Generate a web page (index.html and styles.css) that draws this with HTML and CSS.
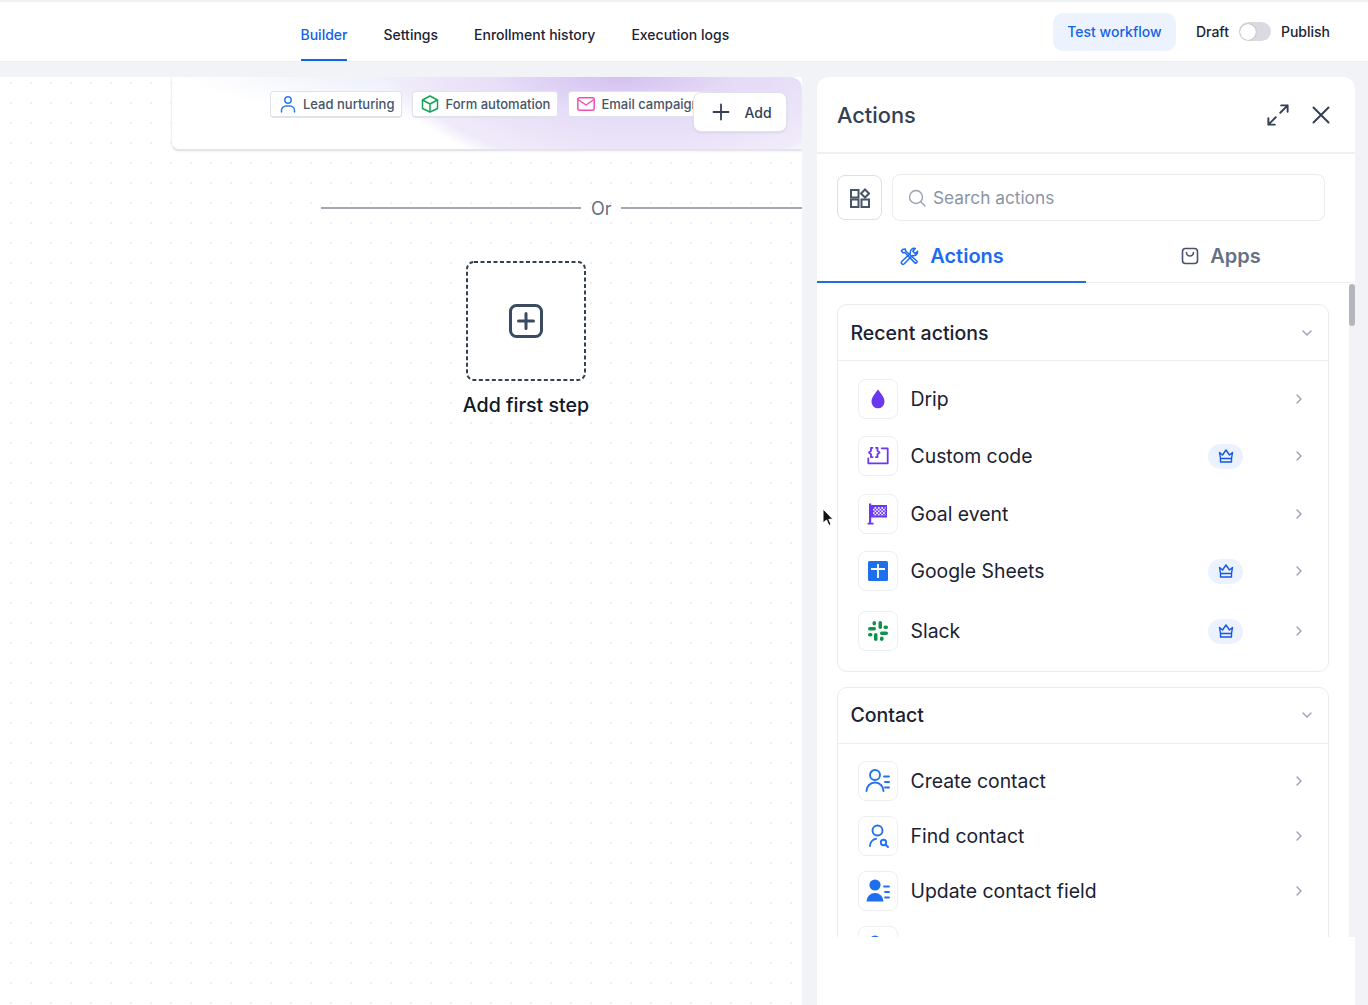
FILE: index.html
```html
<!DOCTYPE html>
<html lang="en">
<head>
  <meta charset="UTF-8">
  <meta name="viewport" content="width=device-width, initial-scale=1.0">
  <title>Workflow builder</title>
  <link rel="stylesheet" href="styles.css">
</head>
<body>
  <!-- Top bar -->
  <header class="topbar">
    <nav class="tabs">
      <a class="tab active">Builder</a>
      <a class="tab">Settings</a>
      <a class="tab">Enrollment history</a>
      <a class="tab">Execution logs</a>
    </nav>
    <div class="top-actions">
      <button class="test-btn">Test workflow</button>
      <span class="status">Draft</span>
      <span class="toggle"><span class="knob"></span></span>
      <span class="status">Publish</span>
    </div>
  </header>

  <main class="workspace">
    <!-- Canvas -->
    <section class="canvas">
      <div class="template-card">
        <span class="chip">
          <svg width="18" height="18" viewBox="0 0 18 18" fill="none" stroke="#2f7bf0" stroke-width="1.5" stroke-linecap="round"><circle cx="9" cy="5" r="3.2"/><path d="M2.5 17v-1.500a4.500 4.500 0 0 1 4.500-4.500h4a4.500 4.500 0 0 1 4.500 4.500V17"/></svg>
          Lead nurturing
        </span>
        <span class="chip">
          <svg width="18" height="18" viewBox="0 0 18 18" fill="none" stroke="#16a35a" stroke-width="1.5" stroke-linejoin="round"><path d="M9 1l7.500 4v8.500L9 17l-7.500-3.500V5z"/><path d="M1.500 5L9 9l7.500-4M9 9v8"/></svg>
          Form automation
        </span>
        <span class="chip chip-email">
          <svg width="18" height="18" viewBox="0 0 18 18" fill="none" stroke="#ee4fb5" stroke-width="1.500" stroke-linejoin="round"><rect x="0.800" y="2.800" width="16.400" height="12.400" rx="2"/><path d="M1 4.500l8 5.500 8-5.500"/></svg>
          Email campaign
        </span>
        <span class="chip chip-hidden"></span>
      </div>
      <button class="add-btn">
        <svg width="18" height="18" viewBox="0 0 18 18" fill="none" stroke="#344054" stroke-width="1.800" stroke-linecap="round"><path d="M9 1.500v15M1.500 9h15"/></svg>
        Add
      </button>

      <div class="or-row">
        <span class="or-line first"></span>
        <span class="or-text">Or</span>
        <span class="or-line"></span>
      </div>

      <div class="first-step">
        <div class="step-box">
          <svg class="step-dash" width="120" height="120" viewBox="0 0 120 120" fill="none"><rect x="1" y="1" width="118" height="118" rx="7" stroke="#344054" stroke-width="2" stroke-dasharray="4 2.500"/></svg>
          <svg width="36" height="36" viewBox="0 0 36 36" fill="none" stroke="#3a4a60" stroke-width="3" stroke-linecap="round"><rect x="2.500" y="2.500" width="31" height="31" rx="6"/><path d="M18 10.500v15M10.500 18h15"/></svg>
        </div>
        <div class="step-label">Add first step</div>
      </div>
    </section>

    <!-- Actions panel -->
    <aside class="panel">
      <div class="panel-head">
        <h2>Actions</h2>
        <div class="panel-icons">
          <svg width="22" height="22" viewBox="0 0 24 24" fill="none" stroke="#344054" stroke-width="2.100" stroke-linecap="round" stroke-linejoin="round"><path d="M14.500 9.500L22.500 1.500M15.500 1.500h7v7M9.500 14.500l-8 8M1.500 15.500v7h7"/></svg>
          <svg width="20" height="20" viewBox="0 0 20 20" fill="none" stroke="#344054" stroke-width="2" stroke-linecap="round"><path d="M2.500 2.500l15 15M17.500 2.500l-15 15"/></svg>
        </div>
      </div>

      <div class="search-row">
        <button class="grid-btn">
          <svg width="20" height="20" viewBox="0 0 20 20" fill="none" stroke="#475467" stroke-width="2"><rect x="1" y="2" width="7.500" height="7.500"/><rect x="1" y="11.500" width="7.500" height="7.500"/><rect x="11.500" y="11.500" width="7.500" height="7.500"/><path d="M15 1.500l4 4-4 4-4-4z"/></svg>
        </button>
        <div class="search-box">
          <svg width="18" height="18" viewBox="0 0 18 18" fill="none" stroke="#98a2b3" stroke-width="1.400" stroke-linecap="round"><circle cx="8" cy="8" r="6.500"/><path d="M13 13l4 4"/></svg>
          <span>Search actions</span>
        </div>
      </div>

      <div class="panel-tabs">
        <div class="panel-tab active">
          <svg width="19" height="19" viewBox="0 0 20 20" fill="none" stroke="#1d6bf0" stroke-width="1.600" stroke-linejoin="round" stroke-linecap="round"><path d="M3 2.500L1.500 4l1.500 2 2-.2L16 17a1.800 1.800 0 0 0 2-2L6 4.200 5.500 2z"/><path d="M18.500 4.500l-2.500 2.500-2.500-2.500 2.500-3a4.200 4.200 0 0 0-5 5.200L2 15a1.800 1.800 0 0 0 2.500 2.700l8.500-8.800a4.200 4.200 0 0 0 5.500-4.400z"/></svg>
          Actions
        </div>
        <div class="panel-tab">
          <svg width="18" height="18" viewBox="0 0 18 18" fill="none" stroke="#475467" stroke-width="1.600" stroke-linecap="round"><rect x="1.500" y="1.500" width="15" height="15" rx="3"/><path d="M5.500 5.500a3.500 3.500 0 0 0 7 0"/></svg>
          Apps
        </div>
      </div>

      <div class="action-scroll">
        <div class="action-card">
          <div class="card-head">
            <span>Recent actions</span>
            <svg class="chev-down" width="12" height="12" viewBox="0 0 12 12" fill="none" stroke="#98a2b3" stroke-width="1.400" stroke-linecap="round" stroke-linejoin="round"><path d="M2 4l4 4 4-4"/></svg>
          </div>
          <div class="action-list">
            <div class="action-row">
              <span class="action-icon"><svg width="24" height="24" viewBox="0 0 24 24"><path fill="#6a38ef" d="M12 2.500C9.500 6 5.500 10 5.500 14.800a6.500 6.500 0 0 0 13 0C18.500 10 14.500 6 12 2.500z"/></svg></span>
              <span class="action-name">Drip</span>
              <svg class="chev" width="12" height="12" viewBox="0 0 12 12" fill="none" stroke="#98a2b3" stroke-width="1.400" stroke-linecap="round" stroke-linejoin="round"><path d="M4 2l4 4-4 4"/></svg>
            </div>
            <div class="action-row">
              <span class="action-icon"><svg width="24" height="24" viewBox="0 0 24 24" fill="none" stroke="#6a38ef" stroke-width="1.800" stroke-linecap="round" stroke-linejoin="round"><path d="M15.700 4.300H21.700V19.300H2.300V14.300"/><path d="M6.500 3.800H5v3L3 8.500l2 1.700v3h1.500M10 3.800h1.500v3l2 1.700-2 1.700v3H10"/></svg></span>
              <span class="action-name">Custom code</span>
              <span class="crown"><svg width="16" height="16" viewBox="0 0 16 16" fill="none" stroke="#1557e6" stroke-width="1.400" stroke-linejoin="round"><path d="M1.500 4.500L4.500 7 8 2l3.500 5 3-2.500-1 6h-11z"/><path d="M2.500 10.500v3.500h11v-3.500"/></svg></span>
              <svg class="chev" width="12" height="12" viewBox="0 0 12 12" fill="none" stroke="#98a2b3" stroke-width="1.400" stroke-linecap="round" stroke-linejoin="round"><path d="M4 2l4 4-4 4"/></svg>
            </div>
            <div class="action-row">
              <span class="action-icon"><svg width="24" height="24" viewBox="0 0 24 24"><defs><pattern id="check" width="3.400" height="3.400" patternUnits="userSpaceOnUse"><rect width="3.400" height="3.400" fill="#6a38ef"/><rect width="1.700" height="1.700" fill="#efe9ff"/><rect x="1.700" y="1.700" width="1.700" height="1.700" fill="#efe9ff"/></pattern></defs><path fill="#6a38ef" d="M3 1.500h2.200v21H3zM1.500 20.800h6v1.700h-6z"/><rect x="5" y="3" width="16" height="12.500" fill="#6a38ef"/><rect x="7" y="5" width="12.500" height="8.500" fill="url(#check)"/></svg></span>
              <span class="action-name">Goal event</span>
              <svg class="chev" width="12" height="12" viewBox="0 0 12 12" fill="none" stroke="#98a2b3" stroke-width="1.400" stroke-linecap="round" stroke-linejoin="round"><path d="M4 2l4 4-4 4"/></svg>
            </div>
            <div class="action-row">
              <span class="action-icon"><svg width="20" height="20" viewBox="0 0 20 20"><rect width="20" height="20" rx="1.500" fill="#1d6fee"/><path d="M3 8h14M10 3v14" stroke="#fff" stroke-width="1.800" fill="none"/></svg></span>
              <span class="action-name">Google Sheets</span>
              <span class="crown"><svg width="16" height="16" viewBox="0 0 16 16" fill="none" stroke="#1557e6" stroke-width="1.400" stroke-linejoin="round"><path d="M1.500 4.500L4.500 7 8 2l3.500 5 3-2.500-1 6h-11z"/><path d="M2.500 10.500v3.500h11v-3.500"/></svg></span>
              <svg class="chev" width="12" height="12" viewBox="0 0 12 12" fill="none" stroke="#98a2b3" stroke-width="1.400" stroke-linecap="round" stroke-linejoin="round"><path d="M4 2l4 4-4 4"/></svg>
            </div>
            <div class="action-row slack-row">
              <span class="action-icon"><svg width="22" height="22" viewBox="0 0 22 22" fill="#0d9448"><rect x="1" y="7" width="8" height="3.500" rx="1.750"/><rect x="5.500" y="1" width="3.500" height="4.500" rx="1.750"/><rect x="11.500" y="1" width="3.500" height="8" rx="1.750"/><rect x="16.500" y="5.500" width="4.500" height="3.500" rx="1.750"/><rect x="13" y="11.500" width="8" height="3.500" rx="1.750"/><rect x="13" y="16.500" width="3.500" height="4.500" rx="1.750"/><rect x="7" y="13" width="3.500" height="8" rx="1.750"/><rect x="1" y="13" width="4.500" height="3.500" rx="1.750"/></svg></span>
              <span class="action-name">Slack</span>
              <span class="crown"><svg width="16" height="16" viewBox="0 0 16 16" fill="none" stroke="#1557e6" stroke-width="1.400" stroke-linejoin="round"><path d="M1.500 4.500L4.500 7 8 2l3.500 5 3-2.500-1 6h-11z"/><path d="M2.500 10.500v3.500h11v-3.500"/></svg></span>
              <svg class="chev" width="12" height="12" viewBox="0 0 12 12" fill="none" stroke="#98a2b3" stroke-width="1.400" stroke-linecap="round" stroke-linejoin="round"><path d="M4 2l4 4-4 4"/></svg>
            </div>
          </div>
        </div>

        <div class="action-card">
          <div class="card-head">
            <span>Contact</span>
            <svg class="chev-down" width="12" height="12" viewBox="0 0 12 12" fill="none" stroke="#98a2b3" stroke-width="1.400" stroke-linecap="round" stroke-linejoin="round"><path d="M2 4l4 4 4-4"/></svg>
          </div>
          <div class="action-list contact-list">
            <div class="action-row">
              <span class="action-icon"><svg width="26" height="26" viewBox="0 0 26 26" fill="none" stroke="#2571ee" stroke-width="1.900" stroke-linecap="round"><circle cx="10" cy="7" r="5"/><path d="M1.500 23a8.500 8.500 0 0 1 17 0M19 8.500h5M20 14h4M20 19.500h4"/></svg></span>
              <span class="action-name">Create contact</span>
              <svg class="chev" width="12" height="12" viewBox="0 0 12 12" fill="none" stroke="#98a2b3" stroke-width="1.400" stroke-linecap="round" stroke-linejoin="round"><path d="M4 2l4 4-4 4"/></svg>
            </div>
            <div class="action-row">
              <span class="action-icon"><svg width="24" height="24" viewBox="0 0 24 24" fill="none" stroke="#2571ee" stroke-width="1.900" stroke-linecap="round"><circle cx="11.500" cy="6.500" r="5"/><path d="M4 22a7.500 7.500 0 0 1 6-7.300"/><circle cx="17.500" cy="18.500" r="2.700"/><path d="M20 21l2 2"/></svg></span>
              <span class="action-name">Find contact</span>
              <svg class="chev" width="12" height="12" viewBox="0 0 12 12" fill="none" stroke="#98a2b3" stroke-width="1.400" stroke-linecap="round" stroke-linejoin="round"><path d="M4 2l4 4-4 4"/></svg>
            </div>
            <div class="action-row">
              <span class="action-icon"><svg width="26" height="26" viewBox="0 0 26 26" fill="none"><circle cx="10" cy="7" r="5.600" fill="#1d6fee"/><path d="M1.500 23.500a8.500 8.500 0 0 1 17 0z" fill="#1d6fee"/><path d="M19 8.500h5M20 14h4M20 19.500h4" stroke="#2571ee" stroke-width="1.800" stroke-linecap="round"/></svg></span>
              <span class="action-name">Update contact field</span>
              <svg class="chev" width="12" height="12" viewBox="0 0 12 12" fill="none" stroke="#98a2b3" stroke-width="1.400" stroke-linecap="round" stroke-linejoin="round"><path d="M4 2l4 4-4 4"/></svg>
            </div>
            <div class="action-row">
              <span class="action-icon"><svg width="26" height="26" viewBox="0 0 26 26" fill="none"><circle cx="10" cy="8" r="5.600" fill="#2571ee"/></svg></span>
            </div>
          </div>
        </div>
      </div>
      <div class="scroll-track"><div class="scroll-thumb"></div></div>
    </aside>
  </main>

  <!-- Mouse pointer in the capture -->
  <svg class="cursor" width="13" height="19" viewBox="0 0 13 19"><path d="M1 1v14l3.500-3 2.300 5.500 2.300-1-2.300-5.200H11z" fill="#111" stroke="#fff" stroke-width="1"/></svg>
</body>
</html>
```

FILE: styles.css
```css
* {
  box-sizing: border-box;
}
html, body {
  height: 100%;
}
body {
  margin: 0;
  height: 100vh;
  overflow: hidden;
  display: flex;
  flex-direction: column;
  font-family: Inter, "Liberation Sans", sans-serif;
  background-color: #f1f3f7;
  color: #101828;
}
button {
  font-family: inherit;
  cursor: pointer;
}

/* Top bar */
.topbar {
  height: 62px;
  flex-shrink: 0;
  display: flex;
  justify-content: space-between;
  padding: 0 38px 0 300.500px;
  background: white;
  border-top: 2px solid #f0f1f4;
  border-bottom: 1px solid #eceef2;
}
.tabs {
  display: flex;
  gap: 36px;
}
.tab {
  display: flex;
  align-items: center;
  height: 59px;
  padding-top: 8px;
  font-size: 14px;
  font-weight: 500;
  color: #1d2433;
  border-bottom: 2px solid transparent;
}
.tab.active {
  color: #1263e6;
  border-bottom-color: #1263e6;
}
.top-actions {
  display: flex;
  align-items: center;
  height: 59px;
  font-size: 14px;
  font-weight: 500;
}
.test-btn {
  width: 123px;
  height: 38px;
  margin-right: 20px;
  border: none;
  border-radius: 10px;
  background: #edf3fe;
  color: #1263e6;
  font-size: 14px;
  font-weight: 500;
}
.status {
  color: #1d2433;
}
.toggle {
  width: 32px;
  height: 19px;
  margin: 0 10px;
  padding: 1.500px;
  border-radius: 10px;
  background: #d9dbe0;
}
.knob {
  display: block;
  width: 16px;
  height: 16px;
  border-radius: 50%;
  background: white;
  box-shadow: 0 0 1px rgba(0, 0, 0, 0.5);
}

/* Canvas and panel */
.workspace {
  flex: 1;
  min-height: 0;
  display: flex;
  gap: 15px;
  padding-top: 15px;
}
.canvas {
  position: relative;
  width: 802px;
  overflow: hidden;
  background-color: white;
  background-image: radial-gradient(circle, #eeeff2 1px, transparent 1.200px);
  background-size: 20px 20px;
  background-position: 1px -4px;
}
.template-card {
  display: flex;
  align-items: flex-start;
  gap: 10px;
  height: 74px;
  margin-left: 171px;
  padding: 14px 0 0 98px;
  border: 1px solid #eef0f3;
  border-top: none;
  border-right: none;
  border-bottom: 2px solid #e3e5ea;
  border-radius: 0 12px 0 8px;
  background-color: white;
  background-image:
    radial-gradient(ellipse 120px 36px at 447px 0, #d3c1f0, transparent),
    radial-gradient(ellipse 272px 142px at 469px -37px, #e6dcf7 55%, #f0ebfa 92%, transparent 100%),
    radial-gradient(ellipse 420px 60px at 420px -10px, #edf0fb 50%, transparent 100%);
  box-shadow: 0 1px 2px rgba(16, 24, 40, 0.05);
}
.chip {
  display: flex;
  flex-shrink: 0;
  align-items: center;
  gap: 6px;
  height: 27px;
  padding: 0 7px 0 8px;
  border: 1px solid #e0e3e9;
  border-bottom-width: 2px;
  border-radius: 4px;
  background: white;
  font-size: 13px;
  font-weight: 500;
  color: #475467;
  white-space: nowrap;
}
.chip-email {
  width: 152px;
  margin-right: -3px;
  overflow: hidden;
}
.chip-hidden {
  width: 44px;
}
.add-btn {
  position: absolute;
  left: 693px;
  top: 15px;
  width: 94px;
  height: 40px;
  display: flex;
  align-items: center;
  justify-content: center;
  gap: 14px;
  padding: 0 0 0 4px;
  border: 1px solid #e0e3e9;
  border-radius: 8px;
  background: white;
  color: #344054;
  font-size: 14px;
  font-weight: 500;
  box-shadow: 0 1px 2px rgba(16, 24, 40, 0.08);
}
.or-row {
  display: flex;
  align-items: center;
  gap: 10px;
  margin: 45px 0 0 321px;
}
.or-line {
  flex: 1;
  height: 2px;
  background: #a5a8b4;
}
.or-line.first {
  flex: none;
  width: 260px;
}
.or-text {
  width: 20px;
  margin-top: 2px;
  font-size: 18px;
  line-height: 22px;
  color: #667085;
}
.first-step {
  display: flex;
  flex-direction: column;
  align-items: center;
  width: 200px;
  margin: 41px 0 0 426px;
}
.step-box {
  position: relative;
  width: 120px;
  height: 120px;
  display: flex;
  align-items: center;
  justify-content: center;
  border-radius: 8px;
  background: white;
}
.step-dash {
  position: absolute;
  left: 0;
  top: 0;
}
.step-label {
  margin-top: 11px;
  font-size: 19.600px;
  line-height: 26px;
  font-weight: 500;
  color: #101828;
  white-space: nowrap;
}

/* Actions panel */
.panel {
  position: relative;
  width: 538px;
  border-radius: 12px 12px 0 0;
  background: white;
}
.panel-head {
  display: flex;
  justify-content: space-between;
  align-items: center;
  height: 77px;
  padding: 0 24px 0 20px;
  border-bottom: 2px solid #eef0f3;
}
.panel-head h2 {
  margin: 0;
  font-size: 21.800px;
  font-weight: 500;
  color: #344054;
}
.panel-icons {
  display: flex;
  align-items: center;
  gap: 22px;
}
.search-row {
  display: flex;
  gap: 10px;
  padding: 20px 30px 0 20px;
}
.grid-btn {
  width: 45px;
  height: 45px;
  margin-top: 1px;
  display: flex;
  align-items: center;
  justify-content: center;
  border: 1px solid #dcdfe5;
  border-radius: 8px;
  background: white;
}
.search-box {
  flex: 1;
  height: 47px;
  display: flex;
  align-items: center;
  gap: 7px;
  padding-left: 15px;
  border: 1px solid #e9ebef;
  border-radius: 8px;
  font-size: 17.300px;
  color: #8a94a6;
}
.panel-tabs {
  display: flex;
  height: 62px;
  padding-top: 13px;
  border-bottom: 1px solid #eceef2;
}
.panel-tab {
  flex: 1;
  display: flex;
  align-items: center;
  justify-content: center;
  gap: 11px;
  height: 49px;
  padding: 0 0 3px 1px;
  font-size: 20px;
  font-weight: 600;
  color: #667085;
  border-bottom: 2px solid transparent;
}
.panel-tab.active {
  color: #1d6bf0;
  border-bottom-color: #1d6bf0;
}
.action-scroll {
  height: 654px;
  overflow: hidden;
  padding: 21px 26px 0 20px;
}
.action-card {
  margin-bottom: 15px;
  border: 1px solid #e9ebef;
  border-radius: 10px;
}
.card-head {
  display: flex;
  justify-content: space-between;
  align-items: center;
  height: 56px;
  padding: 0 15px 0 12.500px;
  border-bottom: 1px solid #eceef2;
  font-size: 19.500px;
  font-weight: 500;
  color: #1a2233;
}
.action-list {
  display: flex;
  flex-direction: column;
  gap: 17.500px;
  padding: 17.500px 23px 19.500px 20px;
}
.contact-list {
  gap: 15px;
}
.slack-row {
  margin-top: 2.500px;
}
.action-row {
  display: flex;
  align-items: center;
  height: 40px;
}
.action-icon {
  width: 40px;
  height: 40px;
  flex-shrink: 0;
  display: flex;
  align-items: center;
  justify-content: center;
  margin-right: 12.500px;
  border: 1px solid #eceef2;
  border-radius: 8px;
  background: white;
}
.action-name {
  flex: 1;
  font-size: 19.400px;
  color: #1a2233;
}
.crown {
  width: 35px;
  height: 25px;
  display: flex;
  align-items: center;
  justify-content: center;
  margin-right: 50px;
  border-radius: 13px;
  background: #ebf1fd;
}
.scroll-track {
  position: absolute;
  top: 207px;
  right: 0;
  width: 6px;
  height: 653px;
  background: #f3f3f5;
}
.scroll-thumb {
  width: 6px;
  height: 42px;
  border-radius: 3px;
  background: #b4b6bb;
}
.cursor {
  position: fixed;
  left: 822px;
  top: 508px;
}
```
